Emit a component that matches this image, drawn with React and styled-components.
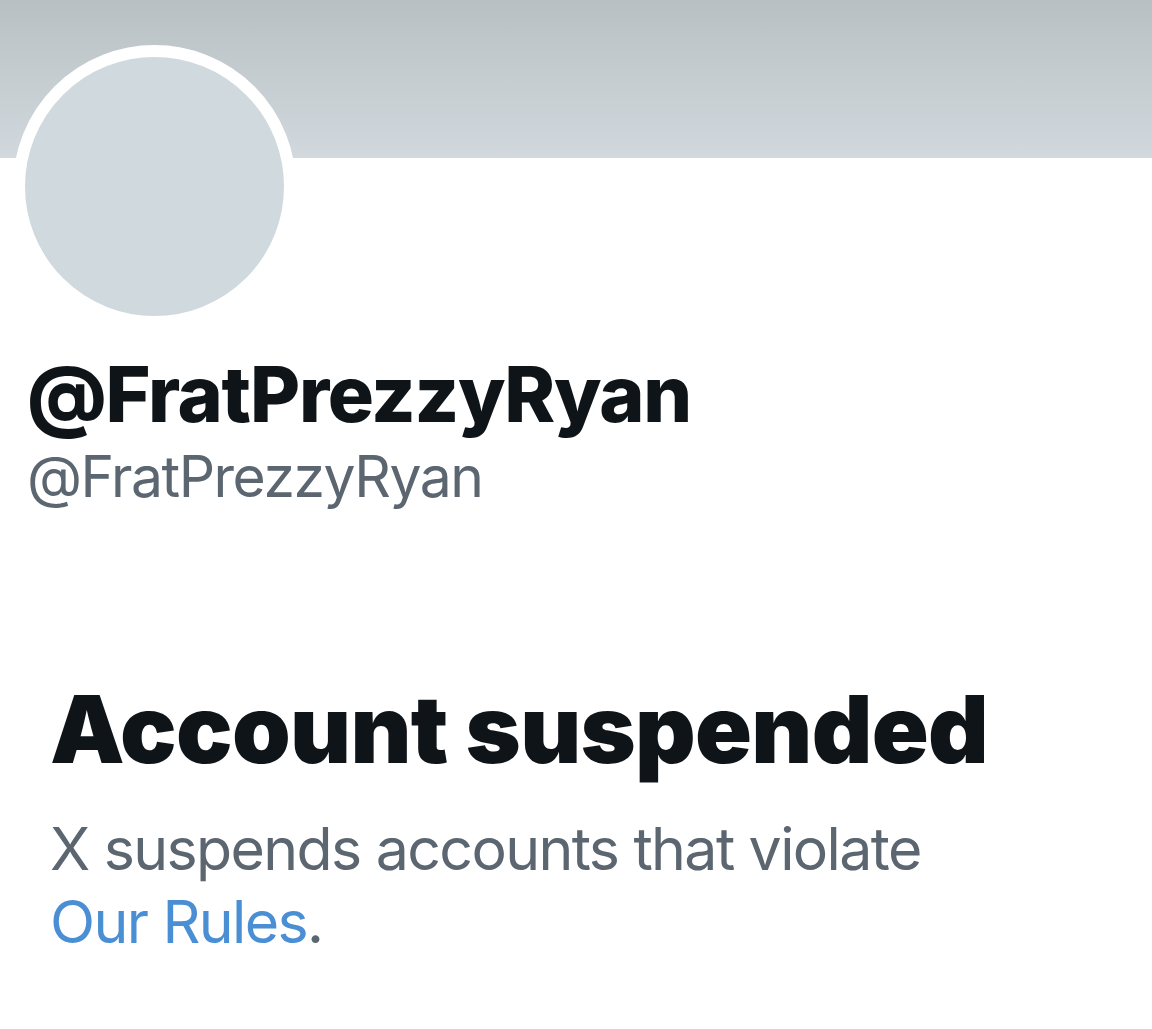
import styled, { createGlobalStyle } from "styled-components";

const GlobalStyle = createGlobalStyle`
  html, body {
    margin: 0;
    padding: 0;
    background: #ffffff;
  }
  body {
    font-family: Inter, "Liberation Sans", sans-serif;
    -webkit-font-smoothing: antialiased;
  }
`;

const Page = styled.div`
  width: 1152px;
  height: 1029px;
  overflow: hidden;
  background: #ffffff;
`;

const Banner = styled.div`
  height: 158px;
  background: linear-gradient(180deg, #b8c0c4 0%, #c5cdd1 50%, #d2d8dd 100%);
`;

const AvatarRing = styled.div`
  width: 259px;
  height: 259px;
  margin: -113px 0 0 13px;
  border: 12px solid #ffffff;
  border-radius: 50%;
  background: #cfd9de;
`;

const Header = styled.div`
  padding: 0 0 0 27px;
  display: flex;
  flex-direction: column;
`;

const DisplayName = styled.h1`
  margin: 21px 0 0;
  font-size: 77px;
  line-height: 90px;
  font-weight: 800;
  letter-spacing: -1.3px;
  color: #0f1419;
`;

const Handle = styled.div`
  font-size: 57px;
  line-height: 75px;
  font-weight: 400;
  letter-spacing: -1.5px;
  color: #5b6670;
`;

const Notice = styled.section`
  padding: 0 0 0 50px;
  margin-top: 160px;
`;

const Title = styled.h2`
  margin: 0;
  font-size: 94px;
  line-height: 110px;
  font-weight: 900;
  letter-spacing: -0.7px;
  color: #0f1419;
`;

const Body = styled.p`
  margin: 28px 0 0;
  font-size: 59px;
  line-height: 73px;
  font-weight: 400;
  letter-spacing: -1.6px;
  color: #5b6670;
`;

const RulesLink = styled.a`
  color: #4a8ed4;
  text-decoration: none;
`;

export default function App() {
  return (
    <Page>
      <GlobalStyle />
      <Banner />
      <AvatarRing />
      <Header>
        <DisplayName>@FratPrezzyRyan</DisplayName>
        <Handle>@FratPrezzyRyan</Handle>
      </Header>
      <Notice>
        <Title>Account suspended</Title>
        <Body>
          X suspends accounts that violate
          <br />
          <RulesLink href="#">Our Rules</RulesLink>.
        </Body>
      </Notice>
    </Page>
  );
}
